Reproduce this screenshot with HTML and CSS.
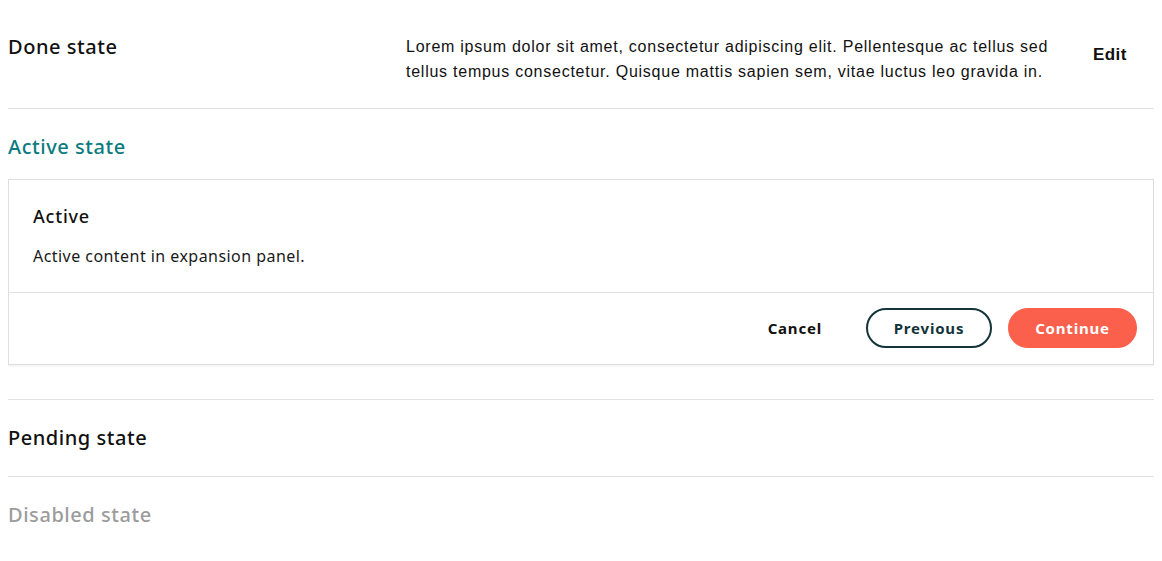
FILE: index.html
```html
<!DOCTYPE html>
<html lang="en">
<head>
<meta charset="utf-8">
<title>Stepper states</title>
<link rel="stylesheet" href="styles.css">
</head>
<body>
<div class="stepper">
  <section class="step step-done">
    <h2 class="step-title">Done state</h2>
    <p class="step-summary">Lorem ipsum dolor sit amet, consectetur adipiscing elit. Pellentesque ac tellus sed tellus tempus consectetur. Quisque mattis sapien sem, vitae luctus leo gravida in.</p>
    <button class="btn-edit" type="button">Edit</button>
  </section>
  <section class="step step-active">
    <h2 class="step-title">Active state</h2>
    <div class="panel">
      <div class="panel-body">
        <h3 class="panel-title">Active</h3>
        <p class="panel-text">Active content in expansion panel.</p>
      </div>
      <div class="panel-footer">
        <button class="btn btn-text" type="button">Cancel</button>
        <button class="btn btn-outline" type="button">Previous</button>
        <button class="btn btn-primary" type="button">Continue</button>
      </div>
    </div>
  </section>
  <section class="step step-pending">
    <h2 class="step-title">Pending state</h2>
  </section>
  <section class="step step-disabled">
    <h2 class="step-title">Disabled state</h2>
  </section>
</div>
</body>
</html>
```
FILE: styles.css
```css
* { box-sizing: border-box; }
body {
  margin: 8px;
  background: #fff;
  font-family: "Noto Sans", "DejaVu Sans", sans-serif;
  color: #111;
}
.stepper { display: flex; flex-direction: column; }
.step {
  padding: 26px 0;
  border-bottom: 1px solid #e2e2e2;
}
.step:last-child { border-bottom: none; }
.step-title {
  margin: 0;
  font-size: 20px;
  line-height: 24px;
  font-weight: 500;
  letter-spacing: 0.55px;
}
.step-done {
  display: flex;
  align-items: flex-start;
  padding: 27px 0 24px;
}
.step-done .step-title { width: 398px; flex: none; }
.step-summary {
  margin: -1px 0 0;
  width: 660px;
  flex: none;
  font-family: "Liberation Sans", Arial, sans-serif;
  font-size: 16px;
  line-height: 25px;
  letter-spacing: 0.75px;
  color: #111;
}
.btn-edit {
  margin: 10px 0 0 27px;
  padding: 0;
  border: none;
  background: none;
  font-family: "Liberation Sans", Arial, sans-serif;
  font-weight: 700;
  font-size: 17px;
  line-height: 20px;
  letter-spacing: 0.4px;
  color: #111;
}
.step-active { padding-bottom: 34px; }
.step-active .step-title { color: #0b7b80; }
.panel {
  margin-top: 20px;
  border: 1px solid #dedede;
  box-shadow: 0 1px 2px rgba(0,0,0,0.08);
  background: #fff;
}
.panel-body {
  padding: 25px 24px 25px;
  border-bottom: 1px solid #e2e2e2;
}
.panel-title {
  margin: 0;
  font-size: 18px;
  line-height: 22px;
  font-weight: 500;
  letter-spacing: 0.8px;
}
.panel-text {
  margin: 18px 0 0;
  font-size: 16px;
  line-height: 22px;
  letter-spacing: 0.45px;
  color: #1a1a1a;
}
.panel-footer {
  display: flex;
  justify-content: flex-end;
  align-items: center;
  gap: 16px;
  padding: 15px 16px 16px;
}
.btn {
  height: 40px;
  border-radius: 20px;
  font-family: "Noto Sans", "DejaVu Sans", sans-serif;
  font-weight: 700;
  font-size: 15px;
  letter-spacing: 0.8px;
  border: 2px solid transparent;
  background: none;
  cursor: pointer;
}
.btn-text { padding: 0 26px 0 20px; color: #111; }
.btn-outline { width: 126px; border-color: #13343a; color: #13343a; }
.btn-primary { width: 129px; background: #fa604c; border-color: #fa604c; color: #fff; }
.step-disabled .step-title { color: #9c9c9c; }
```
